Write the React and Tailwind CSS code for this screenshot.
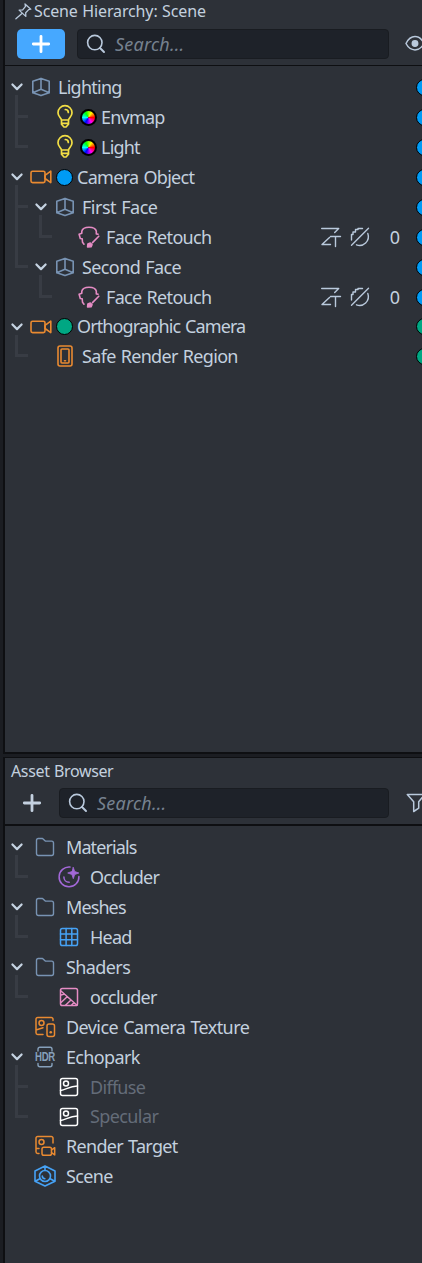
import React from "react";

const Svg = ({ w, h, children, className = "", sw = 1.5 }) => (
  <svg width={w} height={h} viewBox={`0 0 ${w} ${h}`} fill="none" stroke="currentColor" strokeWidth={sw} strokeLinecap="round" strokeLinejoin="round" className={`shrink-0 overflow-visible ${className}`}>
    {children}
  </svg>
);

const Cube = () => (
  <Svg w={20} h={20} className="text-[#7893b3]" sw={1.6}>
    <path d="M1.8 4.2 10 1.4l8.2 2.8v11.6L10 18.6l-8.2-2.8ZM10 1.4v10.9M1.8 15.8 10 12.3l8.2 3.5" />
  </Svg>
);
const Bulb = () => (
  <Svg w={18} h={24} className="text-[#f3df45]" sw={1.7}>
    <path d="M5.500 15C5 12.700 2 11.500 2 7.700a7 7 0 0 1 14 0c0 3.800-3 5-3.500 7.300ZM5.500 15v4.200L8 22h2l2.500-2.800V15M5.500 18.300h7M9.300 4.500c1.700 0 3 1.200 3 2.900" />
  </Svg>
);
const Camera = () => (
  <Svg w={22} h={14} className="text-[#e98a31]" sw={1.6}>
    <rect x="1" y="1.200" width="14" height="11.400" rx="1.600" />
    <path d="M15 5.300 20.800 1.200v11.400L15 8.500Z" />
  </Svg>
);
const Face = () => (
  <Svg w={22} h={22} className="text-[#e58cc4]" sw={1.6}>
    <path d="M6 18.200 4.500 16.300 4.200 12.700 2.300 12.500 1.100 8.200 3.800 7.300V5.200C4.500 2.300 7 1.200 11 1.200s6.700 1.100 7.300 4v2.700l1.800.3M20.800 10.200l-6.300 6.400" />
    <path d="m9.600 21 .3-3 2.400-.9 1.700 1.500-1 2.200Z" fill="currentColor" />
  </Svg>
);
const Region = () => (
  <Svg w={18} h={22} className="text-[#e98a31]" sw={1.6}>
    <rect x="2" y="1" width="14" height="20" rx="2" />
    <rect x="5" y="4" width="8" height="14" rx="1" />
    <path d="M8.500 15.700h1" />
  </Svg>
);
const Folder = () => (
  <Svg w={20} h={20} className="text-[#7893b3]" sw={1.4}>
    <path d="M1.500 3.400c0-1.100.7-1.900 1.800-1.900h4.200l2.800 2.600h6.300c1.200 0 1.900.7 1.900 1.900v10.600c0 1.200-.7 1.900-1.900 1.900H3.400c-1.200 0-1.900-.7-1.900-1.900Z" />
  </Svg>
);
const Material = () => (
  <Svg w={22} h={22} className="text-[#a368d8]" sw={1.500}>
    <path d="M12 1.100A9.900 9.900 0 1 0 20.900 10.500M5.900 11c0 3 2.100 5.300 5.300 5.300" />
    <path d="m15.300 1.500 1.400 4 4.200 1.500-4.200 1.500-1.400 4.200-1.400-4.200-4.200-1.500 4.200-1.500Z" fill="currentColor" strokeWidth="0.800" />
  </Svg>
);
const Grid = () => (
  <Svg w={20} h={20} className="text-[#46a2f5]">
    <rect x="1.500" y="1.500" width="17" height="17" rx="1.800" />
    <path d="M7.100 1.500v17M12.800 1.500v17M1.500 7.100h17M1.500 12.800h17" />
  </Svg>
);
const Shader = () => (
  <Svg w={20} h={20} className="text-[#e58cc4]">
    <rect x="1.500" y="1.500" width="17" height="17" rx="1.800" />
    <path d="m2 4 16 14.200M8.200 9.800 2 15.500M12 13l-5.500 5.200M15 15.500l-2.500 2.700M2 8l3.500-.9" />
  </Svg>
);
const DeviceCam = () => (
  <Svg w={22} h={22} className="text-[#e98a31]">
    <path d="M19 4.500V3.200c0-1-.8-1.700-1.700-1.700H3.700C2.700 1.500 2 2.200 2 3.200v13.600c0 1 .7 1.700 1.700 1.700H9M2 14l7-2.300" />
    <circle cx="7.500" cy="7" r="2.500" />
    <rect x="13" y="8" width="7.500" height="12.500" rx="2" />
    <path d="M16.700 16.300h.1" strokeWidth="2.500" />
  </Svg>
);
const Hdr = () => (
  <div className="relative flex h-[22px] w-5 items-center justify-center text-[#86a0bb]">
    <Svg w={20} h={22} sw={1.4}>
      <path d="M3 5V3.200c0-1.200.8-1.900 1.900-1.900h10.200c1.100 0 1.900.7 1.900 1.900V5M3 17.500v1.300c0 1.200.8 1.900 1.900 1.900h10.200c1.100 0 1.900-.7 1.900-1.900v-1.300" />
    </Svg>
    <span className="absolute inset-x-[-8px] top-0 flex h-[22px] scale-x-[0.8] items-center justify-center font-['Liberation_Sans',sans-serif] text-[12px] font-bold leading-[22px] tracking-[-0.3px]">HDR</span>
  </div>
);
const Picture = () => (
  <Svg w={20} h={20} className="text-white">
    <rect x="1.500" y="1.500" width="17" height="17" rx="2" />
    <circle cx="7" cy="6.500" r="2.500" />
    <path d="M1.500 13.500c5.500-.8 8.500-4 17-4.500" />
  </Svg>
);
const Target = () => (
  <Svg w={22} h={22} className="text-[#e98a31]">
    <path d="M19 8V3.200c0-1-.8-1.700-1.700-1.700H3.700C2.700 1.500 2 2.200 2 3.200v13.600c0 1 .7 1.700 1.700 1.700H5M2 13.500h3" />
    <circle cx="7.500" cy="7" r="2.500" />
    <rect x="8" y="12.300" width="9.500" height="7.900" rx="1.800" />
    <path d="m17.500 15 3.200-2.300v7.200l-3.200-2.200" />
  </Svg>
);
const SceneIcon = () => (
  <Svg w={24} h={22} className="text-[#46a2f5]" sw={1.6}>
    <path d="M12 1 22 6v10.300L12 21 2 16.300V6ZM12 1v4.300M2.300 16.200l4.500-2.500M21.700 16.200l-4.500-2.500" />
    <circle cx="12" cy="11" r="5.500" />
    <path d="M9.300 11c0 1.600 1 2.600 2.600 2.700" />
  </Svg>
);
const Search = () => (
  <Svg w={20} h={20} className="text-[#b9c9dc]" sw={1.600}>
    <circle cx="8.800" cy="8.600" r="7.200" />
    <path d="m14 14 4 4" strokeWidth="2" />
  </Svg>
);
const Plus = ({ className }) => (
  <Svg w={20} h={20} className={className} sw={2.800}>
    <path d="M10 2.300v15.400M2.300 10h15.400" />
  </Svg>
);
const Pin = () => (
  <Svg w={17} h={17} className="text-[#b9c9dc]" sw={1.300}>
    <path d="m10 .9 5.800 5.300-2.100.4-3 3.200.1 3.600-6.700-6.300 3.600-.2 2.800-3.600ZM6.900 10.400.9 15.800" />
  </Svg>
);
const Eye = () => (
  <Svg w={20} h={17} className="text-[#b9c9dc]" sw={1.500}>
    <path d="M1 8.500C5.500-.8 14.500-.8 19 8.500 14.500 17 5.500 17 1 8.500Z" />
    <circle cx="10" cy="8.500" r="2.700" fill="currentColor" />
  </Svg>
);
const Filter = () => (
  <Svg w={20} h={20} className="text-[#b9c9dc]" sw={1.500}>
    <path d="M1.300 1.500h17.400l-6 7.200v6.500l-5 3.300V8.700Z" />
  </Svg>
);
const DepthTest = () => (
  <Svg w={20} h={20} className="text-[#b9c9dc]" sw={1.400}>
    <path d="M.7 1.500h17l-4 4M8.500 10.500 1 17.500h8.500M9.500 9.500h10M14.500 9.500v10" />
  </Svg>
);
const NoDepth = () => (
  <Svg w={20} h={20} className="text-[#b9c9dc]" sw={1.400}>
    <path d="M1.500 18.300 18.500 1.300M6.500 17.800C13 20.300 20.500 14 17.800 6.500" />
    <path d="M1.500 13V7.500H3V5H5.500V2.500H8V1.500H12.500" />
  </Svg>
);

const line = "bg-[#383c44]";

const Gutter = ({ kind }) => {
  if (kind === "chev")
    return (
      <div className="flex w-6 shrink-0 flex-col">
        <div className="flex h-[23px] items-end justify-center pb-1">
          <Svg w={12} h={8} className="text-[#c5d3e2]" sw={2.200}>
            <path d="m1.400 1.500 4.600 4.600 4.600-4.600" />
          </Svg>
        </div>
        <div className={`ml-[10px] w-[3px] grow ${line}`} />
      </div>
    );
  if (kind === "blank") return <div className="w-6 shrink-0" />;
  return (
    <div className="flex w-6 shrink-0 pl-[10px]">
      <div className={`w-[3px] ${line} ${kind === "elbow" ? "h-4" : "h-full"}`} />
      {kind !== "pipe" && <div className={`mt-[13px] h-[3px] w-[10px] ${line}`} />}
    </div>
  );
};

const Wheel = () => (
  <div className="flex h-[17px] w-[17px] shrink-0 items-center justify-center rounded-full bg-black">
    <div className="h-[13px] w-[13px] rounded-full bg-[conic-gradient(from_90deg,#f00,#f0f,#00f,#0ff,#0f0,#ff0,#f00)]" />
  </div>
);
const Dot = ({ green }) => (
  <div className={`h-[17px] w-[17px] shrink-0 rounded-full border-[1.5px] border-black ${green ? "bg-[#00a783]" : "bg-[#009bf5]"}`} />
);

const Row = ({ g, icon, badge, label, track = "", slot = "w-6", dot, extra, short, dim }) => (
  <div className={`flex shrink-0 ${short ? "h-[29px]" : "h-[30px]"}`}>
    {g.map((k, i) => <Gutter key={i} kind={k} />)}
    <div className={`flex shrink-0 items-center justify-center ${slot}`}>{icon}</div>
    {badge && <div className="ml-[3px] flex items-center">{badge}</div>}
    <span className={`flex items-center whitespace-pre pb-px [word-spacing:1px] ${badge ? "ml-1" : "ml-[5px]"} ${dim ? "text-[#646c78]" : ""} ${track}`}>{label}</span>
    {dot && (
      <div className="ml-auto flex items-center">
        {extra && (
          <>
            <DepthTest />
            <div className="ml-[9px]"><NoDepth /></div>
            <span className="mr-4 ml-[20px] pb-px">0</span>
          </>
        )}
        <Dot green={dot === "green"} />
      </div>
    )}
  </div>
);

const scene = [
  { g: ["chev"], icon: <Cube />, label: "Lighting", track: "tracking-[-0.75px]", dot: "blue" },
  { g: ["tee", "blank"], icon: <Bulb />, badge: <Wheel />, label: "Envmap", track: "tracking-[-0.8px]", dot: "blue" },
  { g: ["elbow", "blank"], icon: <Bulb />, badge: <Wheel />, label: "Light", track: "tracking-[-0.8px]", dot: "blue" },
  { g: ["chev"], icon: <Camera />, badge: <Dot />, label: "Camera Object", track: "tracking-[-0.7px]", dot: "blue" },
  { g: ["tee", "chev"], icon: <Cube />, label: "First Face", track: "tracking-[-0.5px]", dot: "blue" },
  { g: ["pipe", "elbow", "blank"], icon: <Face />, label: "Face Retouch", track: "tracking-[-0.67px]", dot: "blue", extra: true },
  { g: ["elbow", "chev"], icon: <Cube />, label: "Second Face", track: "tracking-[-0.6px]", dot: "blue" },
  { g: ["blank", "elbow", "blank"], icon: <Face />, label: "Face Retouch", track: "tracking-[-0.67px]", dot: "blue", extra: true },
  { g: ["chev"], icon: <Camera />, badge: <Dot green />, label: "Orthographic Camera", track: "tracking-[-0.88px]", dot: "green", short: true },
  { g: ["elbow", "blank"], icon: <Region />, label: "Safe Render Region", track: "tracking-[-0.67px]", dot: "green" },
];

const assets = [
  { g: ["chev"], icon: <Folder />, label: "Materials", track: "tracking-[-0.9px]" },
  { g: ["elbow", "blank"], icon: <Material />, label: "Occluder", track: "tracking-[-0.85px]" },
  { g: ["chev"], icon: <Folder />, label: "Meshes", track: "tracking-[-0.9px]" },
  { g: ["elbow", "blank"], icon: <Grid />, label: "Head", track: "tracking-[-0.75px]" },
  { g: ["chev"], icon: <Folder />, label: "Shaders", track: "tracking-[-0.6px]" },
  { g: ["elbow", "blank"], icon: <Shader />, label: "occluder", track: "tracking-[-0.75px]" },
  { g: ["blank"], icon: <DeviceCam />, label: "Device Camera Texture", track: "tracking-[-0.58px]" },
  { g: ["chev"], icon: <Hdr />, label: "Echopark", track: "tracking-[-0.65px]" },
  { g: ["tee", "blank"], icon: <Picture />, label: "Diffuse", track: "tracking-[-0.7px]", dim: true },
  { g: ["elbow", "blank"], icon: <Picture />, label: "Specular", track: "tracking-[-0.6px]", dim: true, short: true },
  { g: ["blank"], icon: <Target />, label: "Render Target", track: "tracking-[-0.68px]" },
  { g: ["blank"], icon: <SceneIcon />, label: "Scene", track: "tracking-[-0.65px]" },
];

const SearchBox = ({ className }) => (
  <div className={`flex h-[30px] shrink-0 items-center rounded-sm border border-[#191c21] bg-[#1e2229] pl-2 ${className}`}>
    <Search />
    <span className="ml-[9px] pb-px tracking-[0.2px] italic text-[#76818f]">Search...</span>
  </div>
);

export default function App() {
  return (
    <div className="flex h-[1263px] w-[422px] overflow-hidden bg-[#1b1d22] font-['Noto_Sans',sans-serif] text-[18px] leading-none text-[#c3d0df]">
      <div className="w-[3px] shrink-0" />
      <div className="flex w-[419px] flex-col">
        <section className="flex h-[754px] shrink-0 flex-col border-b-2 border-l-2 border-[#0e0f12] bg-[#2d3138]">
          <header className="flex h-[29px] shrink-0 items-start pt-[3px] pl-[10px]">
            <Pin />
            <h2 className="ml-[2px] text-[16px] tracking-[-0.13px] [word-spacing:0.5px]">Scene Hierarchy: Scene</h2>
          </header>
          <div className="flex h-[37px] shrink-0 items-start border-b border-[#0e0f12] pl-3">
            <div className="flex h-[30px] w-12 shrink-0 items-center justify-center rounded-[5px] bg-[#46a8ff]">
              <Plus className="text-white" />
            </div>
            <SearchBox className="ml-3 w-[312px]" />
            <div className="mt-[6px] ml-4"><Eye /></div>
          </div>
          <div className="flex w-[428px] flex-col pt-[6px]">
            {scene.map((r, i) => <Row key={i} {...r} />)}
          </div>
        </section>
        <div className="h-[3px] shrink-0" />
        <section className="flex grow flex-col border-t border-l-2 border-[#0e0f12] bg-[#2d3138]">
          <header className="flex h-[30px] shrink-0 items-start pt-[5px] pl-[6px]">
            <h2 className="text-[16px] tracking-[-0.35px] [word-spacing:0.5px]">Asset Browser</h2>
          </header>
          <div className="flex h-[38px] shrink-0 items-start border-b-2 border-[#0e0f12] pl-[17px]">
            <div className="mt-[5px]"><Plus className="text-[#c3d0df]" /></div>
            <SearchBox className="ml-[17px] w-[330px]" />
            <div className="mt-[5px] ml-[17px]"><Filter /></div>
          </div>
          <div className="flex flex-col pt-[6px]">
            {assets.map((r, i) => <Row key={i} slot="w-8" {...r} />)}
          </div>
        </section>
      </div>
    </div>
  );
}
